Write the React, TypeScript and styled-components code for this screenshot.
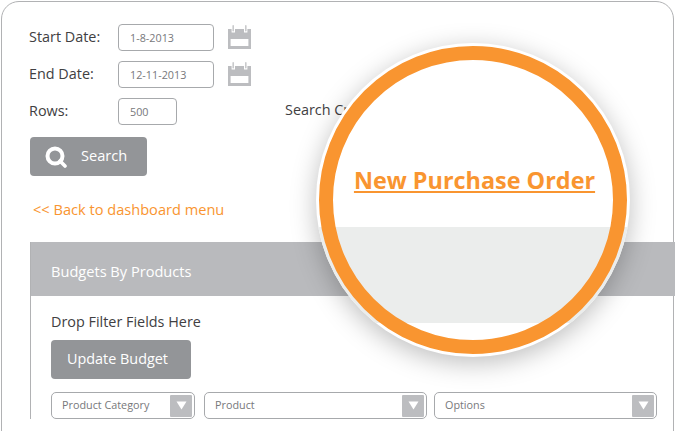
import * as React from 'react';
import styled, { createGlobalStyle } from 'styled-components';

const GlobalStyle = createGlobalStyle`
  html, body {
    margin: 0;
    height: 431px;
    overflow: hidden;
    background: #fff;
    font-family: "Open Sans", "Noto Sans", sans-serif;
    color: #414042;
  }
`;

function CalendarIcon() {
  return (
    <CalendarSvg width="23" height="24" viewBox="0 0 23 24">
      <path
        fillRule="evenodd"
        fill="#bcbdc0"
        d="M0 4h3.6v3.4h3.4V4h9v3.4h3.4V4H23v20H0V4zM2.6 14v7h17.8v-7H2.6z"
      />
      <rect x="4.4" y="0" width="1.6" height="6.6" rx="0.8" fill="#c9cacc" />
      <rect x="17" y="0" width="1.6" height="6.6" rx="0.8" fill="#c9cacc" />
    </CalendarSvg>
  );
}

function SearchIcon() {
  return (
    <svg width="22" height="22" viewBox="0 0 22 22">
      <circle cx="10" cy="10" r="7.5" fill="none" stroke="#fff" strokeWidth="4" />
      <path d="M15 15l5 5" stroke="#fff" strokeWidth="3.6" strokeLinecap="round" />
    </svg>
  );
}

function Select({ label, width, gap }: { label: string; width: number; gap: number }) {
  return (
    <SelectBox $width={width} $gap={gap}>
      <SelectLabel>{label}</SelectLabel>
      <SelectArrow>
        <svg width="11" height="9" viewBox="0 0 11 9">
          <path d="M0.5 0.5h10L5.5 8.5z" fill="#fff" />
        </svg>
      </SelectArrow>
    </SelectBox>
  );
}

export default function App() {
  return (
    <>
      <GlobalStyle />
      <Card>
        <Form>
          <FormRow>
            <FieldLabel>Start Date:</FieldLabel>
            <TextInput $width={96}>1-8-2013</TextInput>
            <CalendarIcon />
          </FormRow>
          <FormRow>
            <FieldLabel>End Date:</FieldLabel>
            <TextInput $width={96}>12-11-2013</TextInput>
            <CalendarIcon />
          </FormRow>
          <FormRow>
            <FieldLabel>Rows:</FieldLabel>
            <TextInput $width={59}>500</TextInput>
            <SearchCriteria>Search Criteria:</SearchCriteria>
          </FormRow>
        </Form>
        <SearchButton>
          <SearchIcon />
          <SearchText>Search</SearchText>
        </SearchButton>
        <BackLink>&lt;&lt; Back to dashboard menu</BackLink>
        <Panel>
          <PanelHeader>Budgets By Products</PanelHeader>
          <PanelBody>
            <DropText>Drop Filter Fields Here</DropText>
            <UpdateButton>Update Budget</UpdateButton>
            <SelectRow>
              <Select label="Product Category" width={144} gap={9} />
              <Select label="Product" width={223} gap={7} />
              <Select label="Options" width={223} gap={0} />
            </SelectRow>
          </PanelBody>
        </Panel>
        <Magnifier>
          <OrderLink>New Purchase Order</OrderLink>
          <MagnifiedBand />
        </Magnifier>
      </Card>
    </>
  );
}

const Card = styled.div`
  position: relative;
  box-sizing: border-box;
  width: 673px;
  height: 500px;
  margin: 1px 0 0 1px;
  padding: 22px 0 0 27px;
  border: 1.5px solid #b1b2b4;
  border-radius: 18px;
`;

const Form = styled.div`
  display: flex;
  flex-direction: column;
  gap: 10px;
`;

const FormRow = styled.div`
  display: flex;
  align-items: center;
  height: 27px;
`;

const FieldLabel = styled.div`
  width: 89px;
  margin-top: -2px;
  font-size: 14.4px;
  color: #414042;
`;

const TextInput = styled.div<{ $width: number }>`
  box-sizing: border-box;
  width: ${(p) => p.$width}px;
  height: 27px;
  padding-left: 11px;
  line-height: 25px;
  font-size: 10.8px;
  color: #77787b;
  border: 1px solid #a7a9ac;
  border-radius: 4px;
`;

const CalendarSvg = styled.svg`
  margin-left: 14px;
  margin-top: -2px;
`;

const SearchCriteria = styled.div`
  margin: -5px 0 0 108px;
  font-size: 14.4px;
  color: #414042;
`;

const SearchButton = styled.div`
  display: flex;
  align-items: center;
  gap: 14px;
  box-sizing: border-box;
  width: 117px;
  height: 39px;
  margin: 12px 0 0 1px;
  padding-left: 15px;
  background: #939598;
  border-radius: 4px;
  color: #fff;
  font-size: 14.6px;
`;

const SearchText = styled.span`
  margin-top: -3px;
`;

const BackLink = styled.div`
  margin: 23px 0 0 4px;
  height: 20px;
  line-height: 20px;
  font-size: 14.6px;
  color: #f99530;
`;

const Panel = styled.div`
  width: 645px;
  margin: 23px 0 0 1px;
  border-left: 1px solid #b1b2b4;
`;

const PanelHeader = styled.div`
  box-sizing: border-box;
  height: 54px;
  padding-left: 20px;
  line-height: 58px;
  background: #b9babd;
  color: #fff;
  font-size: 14.6px;
`;

const PanelBody = styled.div`
  padding: 16px 0 0 20px;
`;

const DropText = styled.div`
  height: 20px;
  line-height: 20px;
  font-size: 14.4px;
  color: #414042;
`;

const UpdateButton = styled.div`
  box-sizing: border-box;
  width: 140px;
  height: 39px;
  margin-top: 8px;
  padding-left: 16px;
  line-height: 38px;
  background: #939598;
  border-radius: 4px;
  color: #fff;
  font-size: 14.4px;
`;

const SelectRow = styled.div`
  display: flex;
  margin-top: 13px;
`;

const SelectBox = styled.div<{ $width: number; $gap: number }>`
  display: flex;
  align-items: center;
  justify-content: space-between;
  box-sizing: border-box;
  width: ${(p) => p.$width}px;
  height: 27px;
  margin-right: ${(p) => p.$gap}px;
  padding: 0 2px 0 10px;
  border: 1px solid #a7a9ac;
  border-radius: 5px;
`;

const SelectLabel = styled.span`
  margin-top: -2px;
  font-size: 10.8px;
  color: #77787b;
`;

const SelectArrow = styled.span`
  display: flex;
  align-items: center;
  justify-content: center;
  width: 22px;
  height: 22px;
  background: #bcbdc0;
  border-radius: 1px;
`;

const Magnifier = styled.div`
  position: absolute;
  left: 314px;
  top: 40.5px;
  box-sizing: border-box;
  width: 314px;
  height: 314px;
  padding-top: 17px;
  border-radius: 50%;
  background: #fff;
  box-shadow: 0 6px 26px rgba(0, 0, 0, 0.26);
  overflow: hidden;
  &::after {
    content: '';
    position: absolute;
    inset: 3px;
    border: 14px solid #f99530;
    border-radius: 50%;
  }
`;

const OrderLink = styled.div`
  height: 167px;
  padding: 104px 0 0 3px;
  box-sizing: border-box;
  text-align: center;
  line-height: 32px;
  font-family: "Open Sans", sans-serif;
  font-weight: 700;
  font-size: 23.4px;
  color: #f99530;
  text-decoration: underline;
`;

const MagnifiedBand = styled.div`
  height: 96px;
  background: #ebedec;
`;
